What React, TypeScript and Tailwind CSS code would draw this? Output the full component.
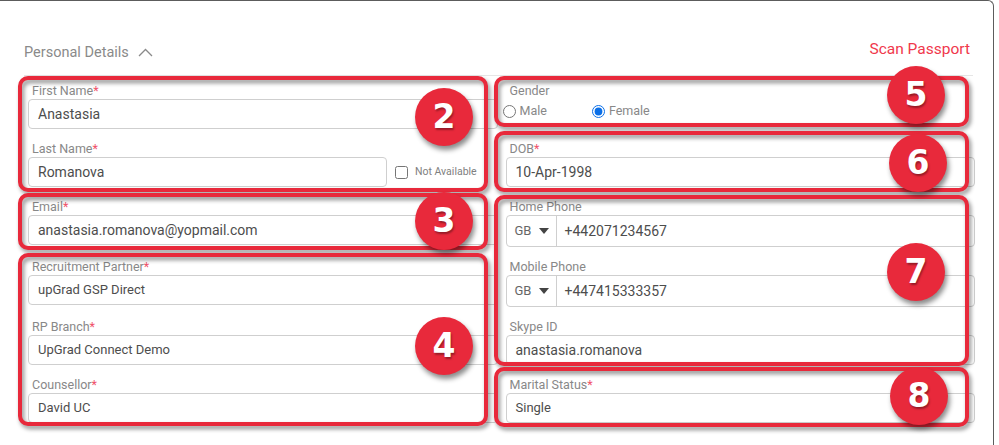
import type { ReactNode } from "react";

function Label({ text, required }: { text: string; required?: boolean }) {
  return (
    <div className="h-[16px] pl-[4px] text-[12.5px] leading-[16px] text-[#888]">
      {text}
      {required && <span className="text-[#f0526a]">*</span>}
    </div>
  );
}

function Input({ value, size = "text-[14px]" }: { value: string; size?: string }) {
  return (
    <div
      className={`flex h-[30px] w-full items-center rounded-[4px] border border-[#cfcfcf] bg-white px-[9px] text-[#4d4d4d] ${size}`}
    >
      {value}
    </div>
  );
}

function Field({
  label,
  required,
  children,
}: {
  label: string;
  required?: boolean;
  children: ReactNode;
}) {
  return (
    <div className="flex flex-col">
      <Label text={label} required={required} />
      {children}
    </div>
  );
}

function PhoneInput({ value }: { value: string }) {
  return (
    <div className="flex h-[32px] w-full rounded-[4px] border border-[#cfcfcf] bg-white">
      <div className="flex w-[50px] items-center justify-between rounded-l-[4px] border-r border-[#cfcfcf] pl-[8px] pr-[7px] text-[13px] text-[#666]">
        GB
        <svg width="10" height="6" viewBox="0 0 10 6">
          <path d="M0 0h10L5 6z" fill="#444" />
        </svg>
      </div>
      <div className="flex items-center pl-[8px] text-[14px] text-[#4d4d4d]">{value}</div>
    </div>
  );
}

function Box({ className }: { className: string }) {
  return (
    <div
      className={`absolute rounded-[10px] border-[4px] border-[#e8293b] drop-shadow-[2px_3px_2px_rgba(0,0,0,0.45)] ${className}`}
    />
  );
}

function Badge({ n, className }: { n: number; className: string }) {
  return (
    <div
      className={`absolute flex h-[58px] w-[58px] items-center justify-center rounded-full bg-[#e8293b] font-['DejaVu_Sans',sans-serif] text-[33px] font-bold text-white shadow-[2px_4px_5px_rgba(0,0,0,0.45)] [text-shadow:1px_2px_2px_rgba(0,0,0,0.35)] ${className}`}
    >
      {n}
    </div>
  );
}

export default function App() {
  return (
    <div className="relative h-[445px] w-[999px] overflow-hidden bg-white font-[Roboto,sans-serif]">
      <div className="h-[445px] w-[994px] rounded-tr-[6px] border-t border-r border-[#5c5c5c]">
        <div className="ml-[24px] w-[949px]">
          <div className="mt-[38px] flex h-[20px] items-start justify-between">
            <div className="mt-[4px] flex items-center gap-[9px] text-[14.5px] leading-[20px] text-[#8a8a8a]">
              Personal Details
              <svg width="15" height="9" viewBox="0 0 15 9" className="mt-[-2px]">
                <polyline points="1,8 7.5,1.5 14,8" fill="none" stroke="#8a8a8a" strokeWidth="1.3" />
              </svg>
            </div>
            <div className="mr-[3px] text-[15.5px] leading-[20px] text-[#f0384c]">Scan Passport</div>
          </div>
          <div className="mt-[16px] border-t border-[#e6e6e6]" />
        </div>

        <div className="ml-[28px] mt-[7px] grid w-[947px] grid-cols-2 gap-x-[8px] gap-y-[12px]">
          <Field label="First Name" required>
            <Input value="Anastasia" />
          </Field>
          <div className="flex flex-col">
            <Label text="Gender" />
            <div className="-ml-[3px] flex h-[24px] items-center text-[12.5px] text-[#888]">
              <label className="flex items-center gap-[4px]">
                <input type="radio" name="g" readOnly className="m-0 h-[13px] w-[13px]" />
                Male
              </label>
              <label className="ml-[45px] flex items-center gap-[4px]">
                <input type="radio" name="g" checked readOnly className="m-0 h-[13px] w-[13px] accent-[#0a6fe8]" />
                Female
              </label>
            </div>
          </div>

          <Field label="Last Name" required>
            <div className="flex items-center">
              <div className="w-[359px]">
                <Input value="Romanova" />
              </div>
              <input type="checkbox" readOnly className="m-0 ml-[8px] h-[13px] w-[13px]" />
              <span className="ml-[7px] text-[10.5px] text-[#808080]">Not Available</span>
            </div>
          </Field>
          <Field label="DOB" required>
            <Input value="10-Apr-1998" />
          </Field>

          <Field label="Email" required>
            <Input value="anastasia.romanova@yopmail.com" />
          </Field>
          <Field label="Home Phone">
            <PhoneInput value="+442071234567" />
          </Field>

          <Field label="Recruitment Partner" required>
            <Input value="upGrad GSP Direct" size="text-[13px]" />
          </Field>
          <Field label="Mobile Phone">
            <PhoneInput value="+447415333357" />
          </Field>

          <Field label="RP Branch" required>
            <Input value="UpGrad Connect Demo" size="text-[13px]" />
          </Field>
          <Field label="Skype ID">
            <Input value="anastasia.romanova" />
          </Field>

          <Field label="Counsellor" required>
            <Input value="David UC" size="text-[13px]" />
          </Field>
          <Field label="Marital Status" required>
            <Input value="Single" size="text-[13px]" />
          </Field>
        </div>
      </div>

      <Box className="left-[18px] top-[76px] h-[116px] w-[470px]" />
      <Box className="left-[18px] top-[193px] h-[57px] w-[470px]" />
      <Box className="left-[18px] top-[253px] h-[173px] w-[470px]" />
      <Box className="left-[494px] top-[76px] h-[51px] w-[475px]" />
      <Box className="left-[494px] top-[131px] h-[61px] w-[475px]" />
      <Box className="left-[494px] top-[195px] h-[171px] w-[475px]" />
      <Box className="left-[494px] top-[367px] h-[60px] w-[475px]" />

      <Badge n={2} className="left-[415px] top-[88px]" />
      <Badge n={3} className="left-[415px] top-[192px]" />
      <Badge n={4} className="left-[415px] top-[317px]" />
      <Badge n={5} className="left-[887px] top-[66px]" />
      <Badge n={6} className="left-[889px] top-[134px]" />
      <Badge n={7} className="left-[887px] top-[243px]" />
      <Badge n={8} className="left-[890px] top-[367px]" />
    </div>
  );
}
